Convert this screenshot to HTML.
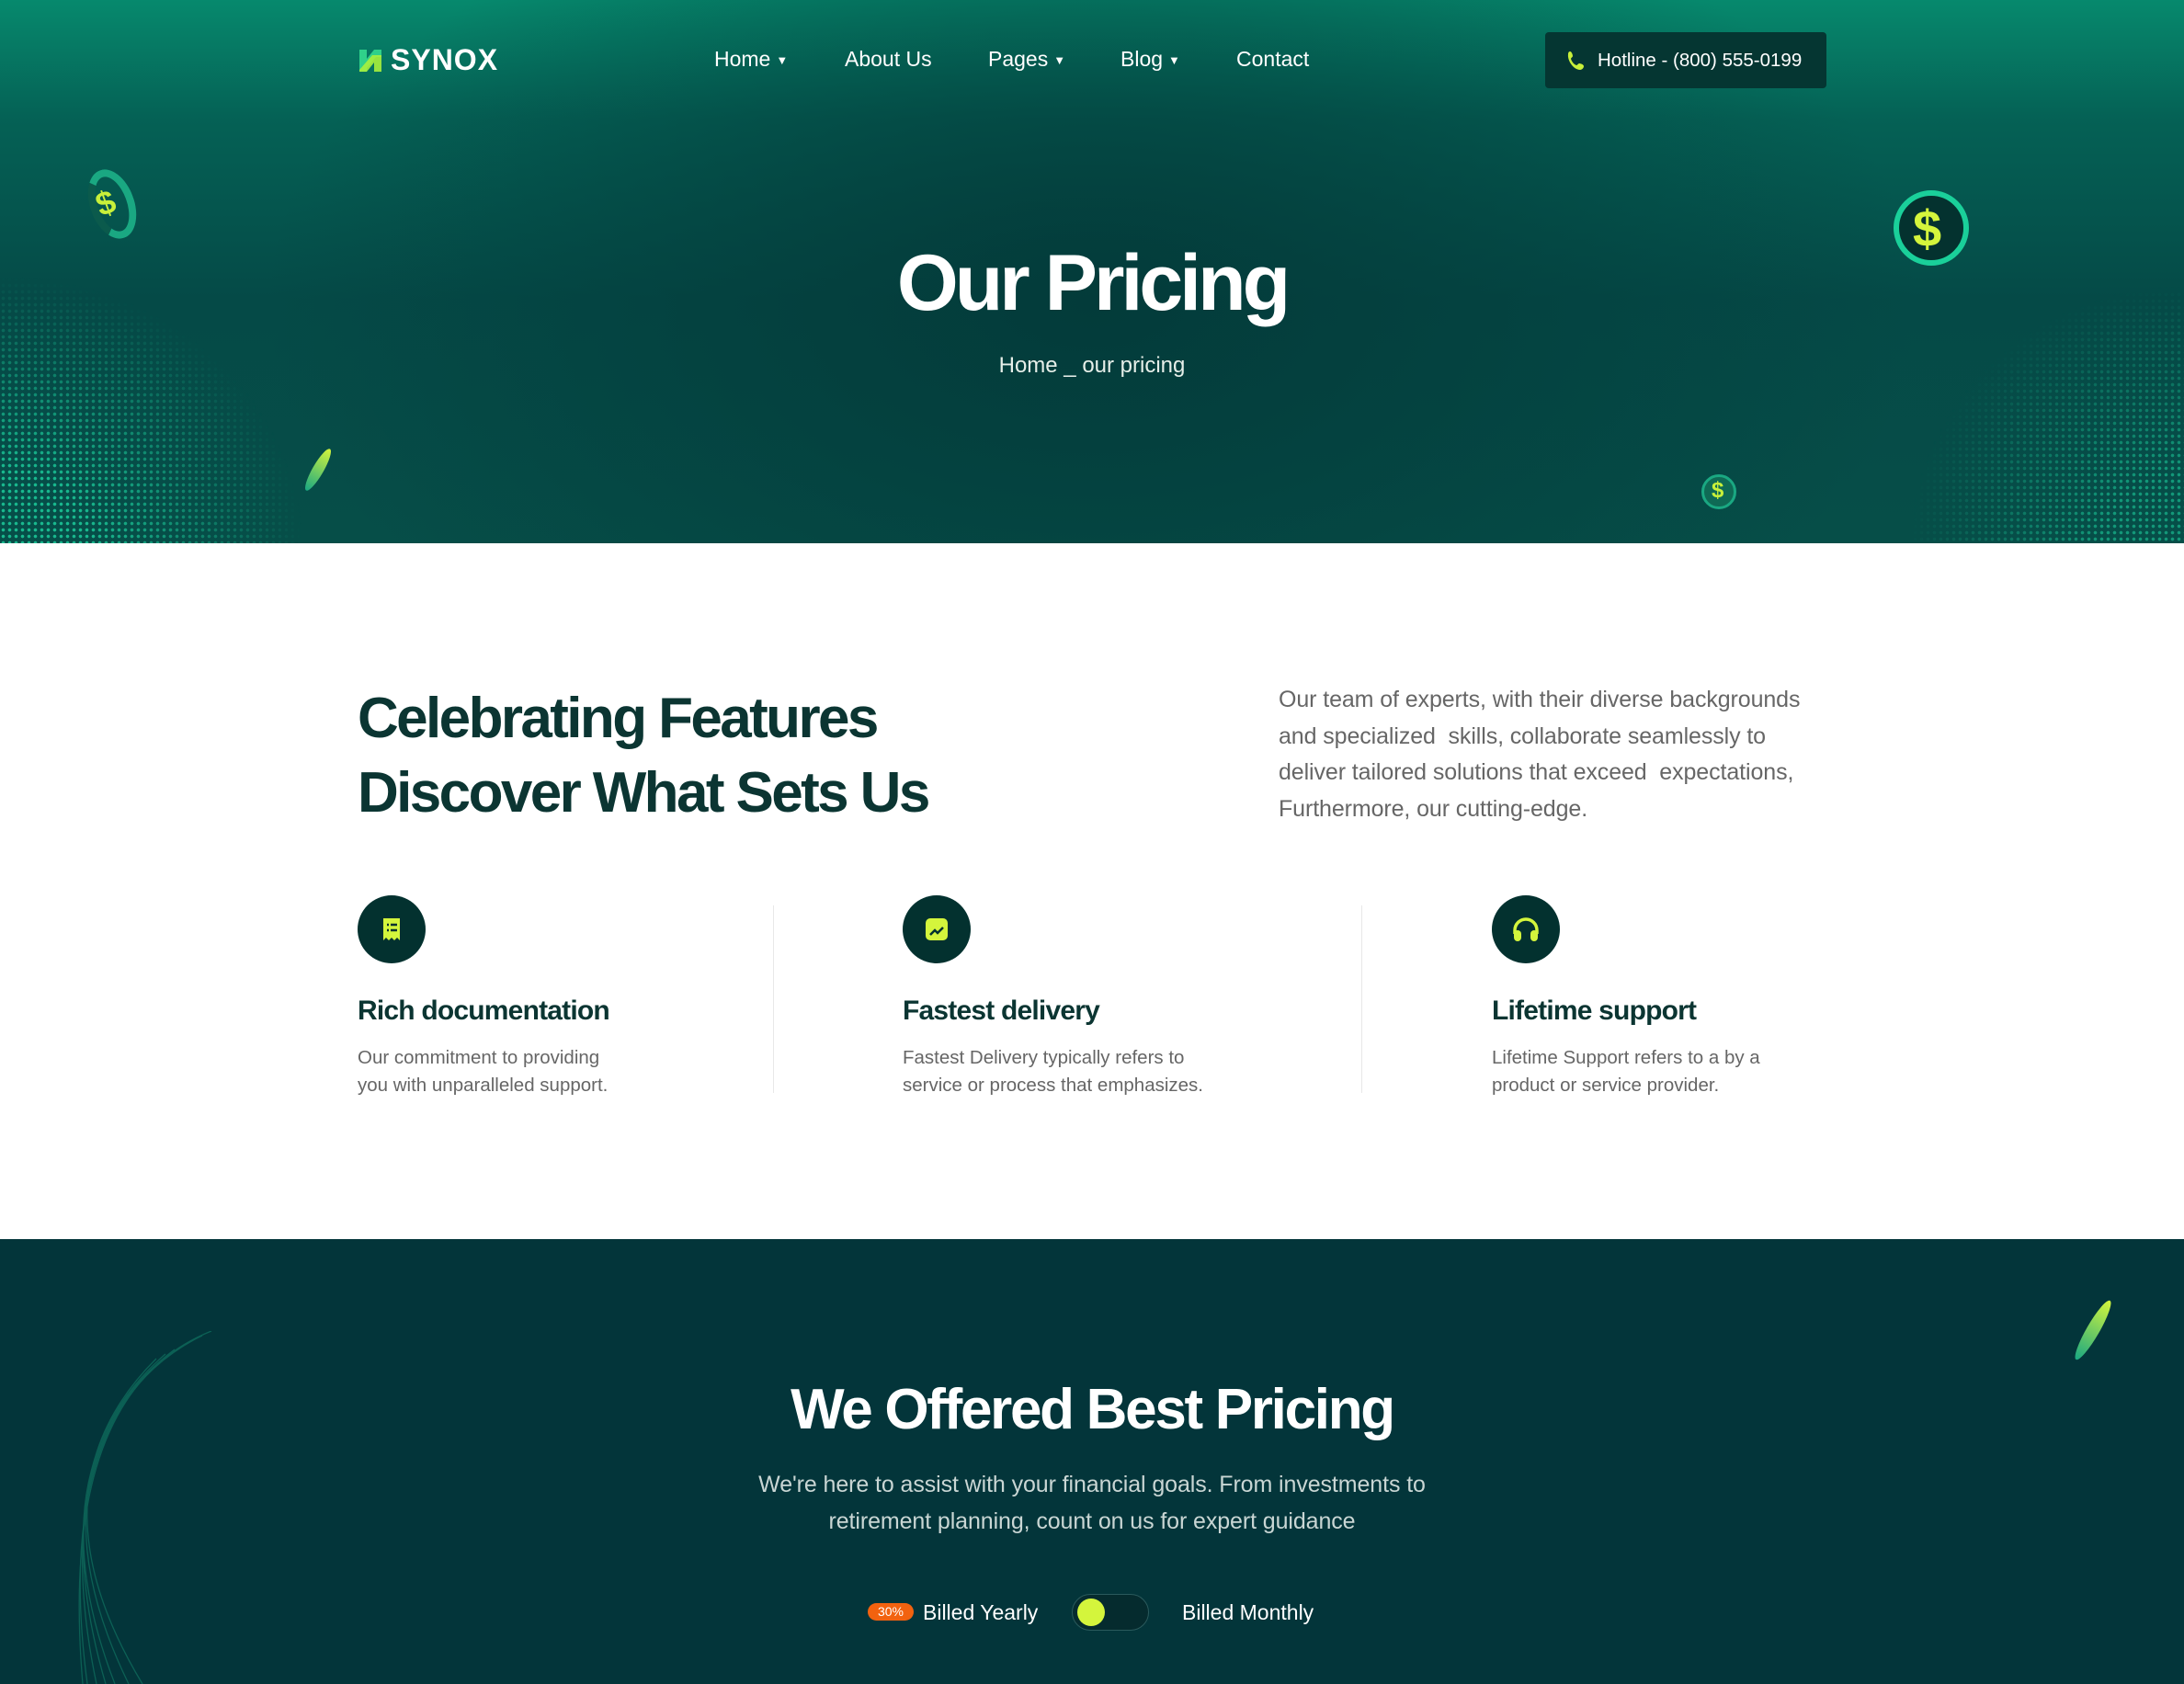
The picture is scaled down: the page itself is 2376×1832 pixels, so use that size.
<!DOCTYPE html>
<html><head><meta charset="utf-8"><style>
*{margin:0;padding:0;box-sizing:border-box}
body{width:2376px;height:1832px;overflow:hidden;font-family:"Liberation Sans",sans-serif;background:#fff;position:relative}
.a{position:absolute;white-space:nowrap}
#hero{position:absolute;left:0;top:0;width:2376px;height:591px;overflow:hidden;
background:radial-gradient(ellipse 900px 500px at 1188px 330px,#033b3a 0%,rgba(3,59,58,0) 100%),linear-gradient(180deg,#06896d 0%,#056155 22%,#054a47 55%,#064e48 100%)}
.dots{position:absolute;background-image:radial-gradient(circle,#19b88e 1.6px,transparent 2px);background-size:7px 7px}
.nav{color:#fff;font-size:23px;top:51px}
.car{font-size:13px;margin-left:6px;vertical-align:2px}
#dark{position:absolute;left:0;top:1348px;width:2376px;height:484px;background:#03353a;overflow:hidden}
.ic{position:absolute;width:74px;height:74px;border-radius:50%;background:#03312f;top:974px}
.ft{font-size:30px;font-weight:bold;color:#0b3532;top:1083px;letter-spacing:-0.8px}
.fd{font-size:20.5px;color:#666;line-height:30px;top:1136px}
.dv{position:absolute;width:1px;background:#e8e8e8;top:985px;height:204px}
</style></head><body>
<div id="hero">
  <div class="dots" style="left:0;top:300px;width:330px;height:291px;-webkit-mask-image:radial-gradient(ellipse 330px 300px at 0 300px,#000 30%,transparent 100%);mask-image:radial-gradient(ellipse 330px 300px at 0 300px,#000 30%,transparent 100%)"></div>
  <div class="dots" style="left:2080px;top:310px;width:296px;height:281px;opacity:.7;-webkit-mask-image:radial-gradient(ellipse 300px 290px at 296px 290px,#000 30%,transparent 100%);mask-image:radial-gradient(ellipse 300px 290px at 296px 290px,#000 30%,transparent 100%)"></div>
  <svg class="a" style="left:389px;top:52px" width="28" height="28" viewBox="0 0 28 28"><path d="M2 2h8v10l8-10h8v8h-6L10 22v4H2z" fill="#2fd08a"/><path d="M26 26h-8V16l-8 10H2v-2l14-16h10z" fill="#a8ef3c" opacity=".9"/></svg>
  <div class="a" style="left:425px;top:47px;color:#fff;font-size:32px;font-weight:bold;letter-spacing:1px">SYNOX</div>
  <div class="a nav" style="left:777px">Home<span class="car">▼</span></div>
  <div class="a nav" style="left:919px">About Us</div>
  <div class="a nav" style="left:1075px">Pages<span class="car">▼</span></div>
  <div class="a nav" style="left:1219px">Blog<span class="car">▼</span></div>
  <div class="a nav" style="left:1345px">Contact</div>
  <div class="a" style="left:1681px;top:35px;width:306px;height:61px;background:#053632;border-radius:4px"></div>
  <svg class="a" style="left:1704px;top:54px" width="22" height="24" viewBox="0 0 22 24"><path d="M4 2c2 0 3 4 3 5s-2 2-2 3c1 3 3 6 6 7 1 0 2-2 3-2s5 1 5 3-2 4-4 4C8 22 1 12 2 5c0-2 1-3 2-3z" fill="#c8f03a"/></svg>
  <div class="a" style="left:1738px;top:54px;color:#fff;font-size:20.5px">Hotline - (800) 555-0199</div>
  <div class="a" style="left:0;width:2376px;text-align:center;top:259px;color:#fff;font-size:86px;font-weight:bold;letter-spacing:-4px">Our Pricing</div>
  <div class="a" style="left:0;width:2376px;text-align:center;top:384px;color:#e6efe9;font-size:24px">Home _ our pricing</div>
  <div class="a" style="left:98px;top:183px;width:48px;height:78px;border-radius:50%;border:8px solid #1aa882;border-left-color:#0b5a4c;transform:rotate(-20deg);"></div>
  <div class="a" style="left:105px;top:200px;color:#c8f03a;font-size:36px;font-weight:bold;transform:rotate(-20deg)">$</div>
  <div class="a" style="left:2060px;top:207px;width:82px;height:82px;border-radius:50%;background:#04322f;border:6px solid #1ad09a"></div>
  <div class="a" style="left:2081px;top:216px;color:#d4f53c;font-size:56px;font-weight:bold">$</div>
  <div class="a" style="left:340px;top:485px;width:12px;height:52px;border-radius:50%;background:linear-gradient(#d4f53c,#1aa882);transform:rotate(30deg)"></div>
  <div class="a" style="left:1851px;top:516px;width:38px;height:38px;border-radius:50%;background:#0f6a55;border:3px solid #1aa882"></div>
  <div class="a" style="left:1862px;top:520px;color:#c8f03a;font-size:24px;font-weight:bold">$</div>
</div>

<div class="a" style="left:389px;top:741px;font-size:62px;font-weight:bold;color:#0b3532;line-height:81px;letter-spacing:-2.6px">Celebrating Features<br>Discover What Sets Us</div>
<div class="a" style="left:1391px;top:742px;font-size:25px;color:#666;line-height:39.5px;letter-spacing:-0.1px">Our team of experts, with their diverse backgrounds<br>and specialized&nbsp; skills, collaborate seamlessly to<br>deliver tailored solutions that exceed&nbsp; expectations,<br>Furthermore, our cutting-edge.</div>

<div class="ic" style="left:389px"><svg width="74" height="74" viewBox="0 0 74 74"><path d="M28 25h18v24l-3-3-3 3-3-3-3 3-3-3-3 3z" fill="#d4f53c"/><path d="M32 32h2M36 32h7M32 38h2M36 38h7" stroke="#03312f" stroke-width="2.5"/></svg></div>
<div class="ic" style="left:982px"><svg width="74" height="74" viewBox="0 0 74 74"><rect x="25" y="25" width="24" height="24" rx="5" fill="#d4f53c"/><path d="M30 43l5-5 3 3 6-6" stroke="#03312f" stroke-width="2.5" fill="none"/></svg></div>
<div class="ic" style="left:1623px"><svg width="74" height="74" viewBox="0 0 74 74"><path d="M25 42v-4a12 12 0 0 1 24 0v4" stroke="#d4f53c" stroke-width="3.5" fill="none"/><rect x="24" y="38" width="8" height="12" rx="4" fill="#d4f53c"/><rect x="42" y="38" width="8" height="12" rx="4" fill="#d4f53c"/></svg></div>
<div class="dv" style="left:841px"></div><div class="dv" style="left:1481px"></div>
<div class="a ft" style="left:389px">Rich documentation</div>
<div class="a ft" style="left:982px">Fastest delivery</div>
<div class="a ft" style="left:1623px">Lifetime support</div>
<div class="a fd" style="left:389px">Our commitment to providing<br>you with unparalleled support.</div>
<div class="a fd" style="left:982px">Fastest Delivery typically refers to<br>service or process that emphasizes.</div>
<div class="a fd" style="left:1623px">Lifetime Support refers to a by a<br>product or service provider.</div>

<div id="dark">
  <svg class="a" style="left:50px;top:100px" width="200" height="384" viewBox="0 0 200 384"><g fill="none" stroke="#0f6b5c" stroke-width="1.3" opacity=".8"><path d="M180 0C80 40 20 150 40 384"/><path d="M170 5C75 50 15 160 45 384"/><path d="M160 10C70 60 10 170 55 384"/><path d="M150 15C65 70 5 180 65 384"/><path d="M140 20C60 80 0 190 75 384"/><path d="M130 25C55 90 0 200 90 384"/><path d="M120 30C50 100 0 210 105 384"/></g></svg>
  <div class="a" style="left:2270px;top:62px;width:14px;height:74px;border-radius:50%;background:linear-gradient(#d4f53c,#1aa882);transform:rotate(30deg)"></div>
  <div class="a" style="left:0;width:2376px;text-align:center;top:150px;color:#fff;font-size:62px;font-weight:bold;letter-spacing:-2.3px">We Offered Best Pricing</div>
  <div class="a" style="left:0;width:2376px;text-align:center;top:248px;color:#c9d6d4;font-size:25px;line-height:39.5px;letter-spacing:-0.1px">We're here to assist with your financial goals. From investments to<br>retirement planning, count on us for expert guidance</div>
  <div class="a" style="left:944px;top:396px;width:50px;height:19px;border-radius:10px;background:#f2620f;color:#fff;font-size:14px;text-align:center;line-height:19px">30%</div>
  <div class="a" style="left:1004px;top:393px;color:#fff;font-size:23px">Billed Yearly</div>
  <div class="a" style="left:1166px;top:386px;width:84px;height:40px;border-radius:20px;background:#052b2e;border:1.5px solid #2a5a5c"></div>
  <div class="a" style="left:1172px;top:391px;width:30px;height:30px;border-radius:50%;background:#d4f53c"></div>
  <div class="a" style="left:1286px;top:393px;color:#fff;font-size:23px">Billed Monthly</div>
</div>
</body></html>
